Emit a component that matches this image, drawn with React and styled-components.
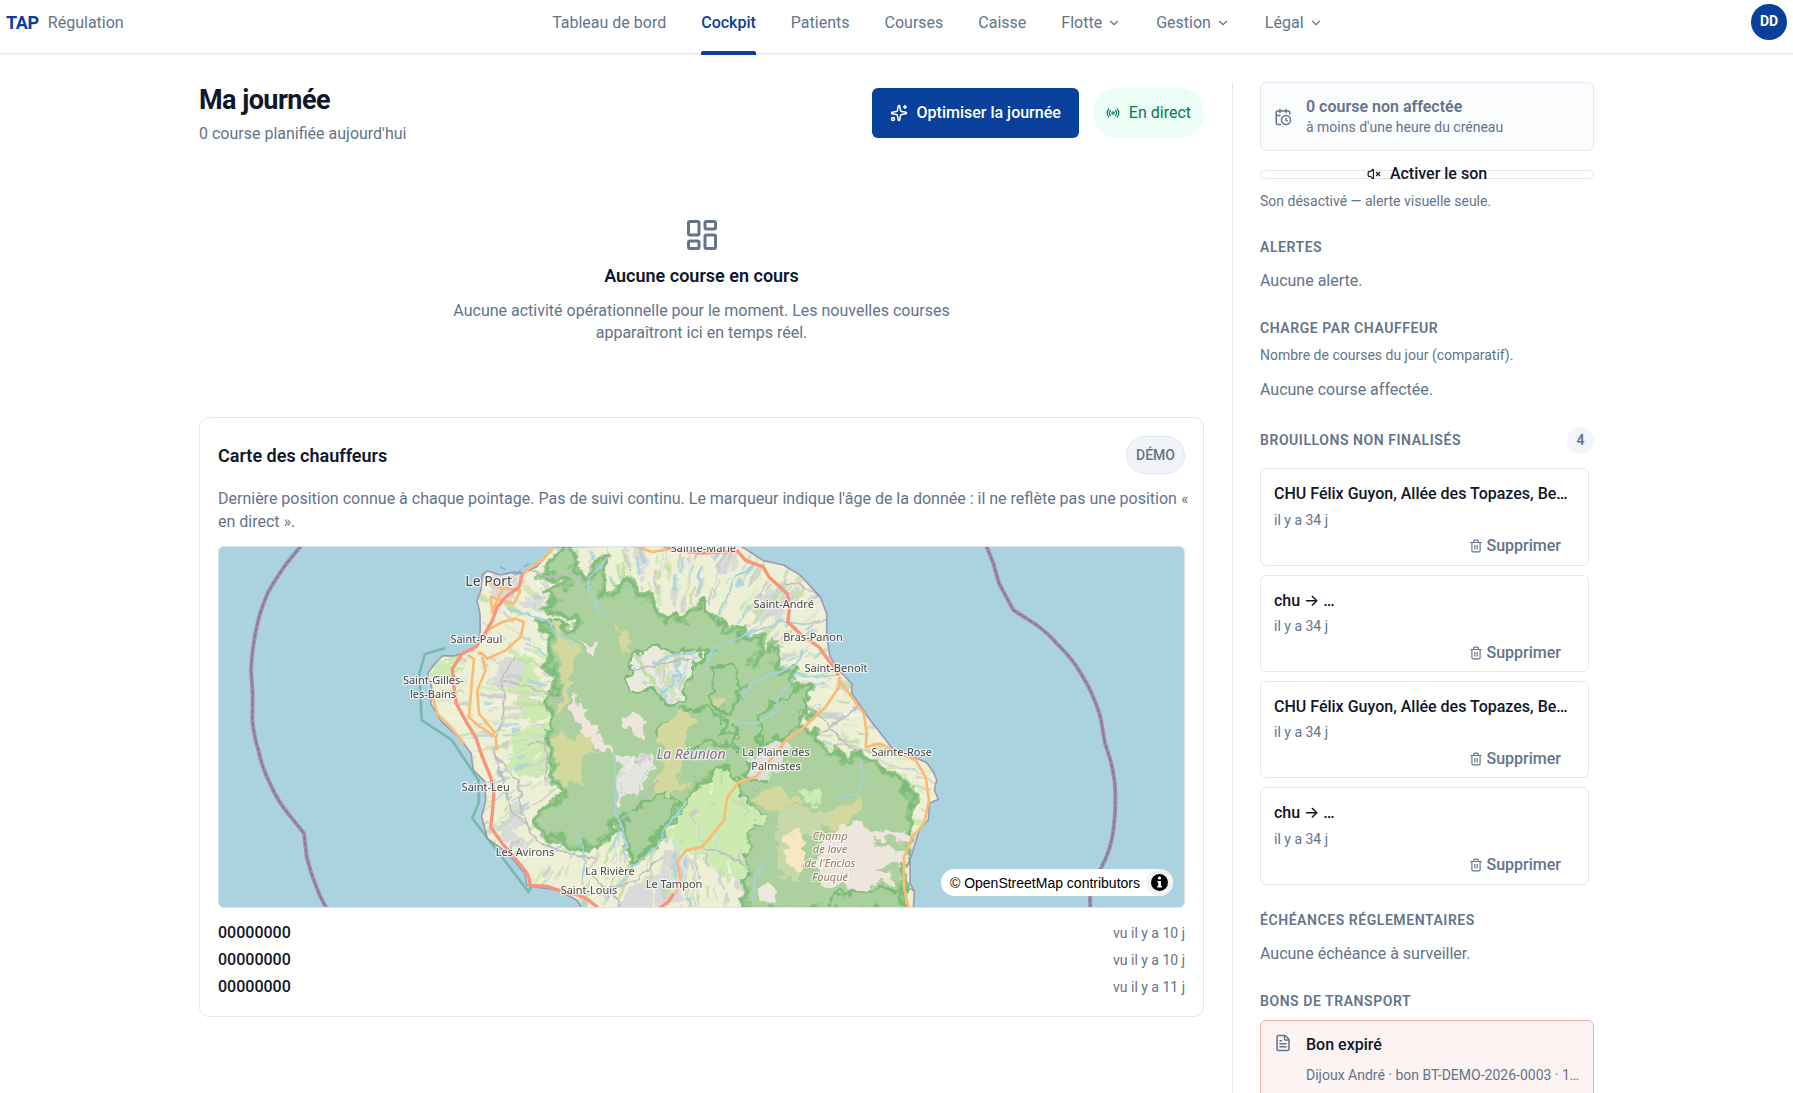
import React from 'react'
import styled, { createGlobalStyle, css } from 'styled-components'
import {
  CalendarClock,
  ChevronDown,
  FileText,
  LayoutDashboard,
  Radio,
  Sparkles,
  Trash2,
  VolumeX
} from 'lucide-react'

const GlobalStyle = createGlobalStyle`
  *, *:before, *:after {
    box-sizing: border-box;
  }

  body {
    margin: 0;
    font: 16px / 1.4 Roboto, Inter, sans-serif;
    color: #0f172a;
    background-color: #fff;
  }

  h1, h2, h3, p, ul {
    margin: 0;
    padding: 0;
  }

  ul {
    list-style: none;
  }

  button {
    font: inherit;
    cursor: pointer;
  }

  svg {
    flex: none;
  }
`

const Shell = styled.div`
  display: flex;
  flex-direction: column;
  height: 100vh;
  overflow: hidden;
`

/* ---------- top bar ---------- */

const TopBar = styled.header`
  display: flex;
  flex: none;
  justify-content: space-between;
  align-items: flex-start;
  height: 54px;
  padding: 4px 6px 0;
  border-bottom: 1px solid #e2e8f0;
  box-shadow: 0 1px 2px rgba(15, 23, 42, 0.05);
`

const Brand = styled.a`
  display: flex;
  align-items: center;
  gap: 9px;
  height: 38px;
  color: #64748b;
  text-decoration: none;

  strong {
    font-size: 18px;
    font-weight: 700;
    color: #08409c;
    letter-spacing: -0.02em;
  }
`

const Nav = styled.nav`
  display: flex;
  gap: 35px;
  height: 50px;
`

const navItem = css`
  position: relative;
  display: flex;
  align-items: center;
  gap: 5px;
  height: 38px;
  padding: 0;
  color: #64748b;
  background: none;
  border: 0;
  text-decoration: none;
`

const NavLink = styled.a`
  ${navItem}

  &.active {
    font-weight: 500;
    color: #08409c;
  }

  &.active:after {
    content: '';
    position: absolute;
    left: 0;
    right: 0;
    bottom: -13px;
    height: 4px;
    background-color: #08409c;
    border-radius: 2px 2px 0 0;
  }
`

const NavButton = styled.button`
  ${navItem}
`

const Avatar = styled.button`
  width: 36px;
  height: 36px;
  padding: 0;
  font-size: 14px;
  font-weight: 700;
  color: #fff;
  background-color: #08409c;
  border: 0;
  border-radius: 50%;
`

/* ---------- page ---------- */

const Page = styled.div`
  display: grid;
  grid-template-columns: minmax(0, 1fr) 362px;
  gap: 28px;
  flex: 1;
  width: 100%;
  max-width: 1395px;
  min-height: 0;
  margin: 0 auto;
  padding-top: 28px;
`

const Main = styled.main`
  display: flex;
  flex-direction: column;
  gap: 28px;
`

const PageHead = styled.div`
  display: flex;
  justify-content: space-between;
  align-items: flex-start;
`

const Title = styled.h1`
  margin-bottom: 5px;
  font-size: 27px;
  font-weight: 700;
  line-height: 36px;
  letter-spacing: -0.02em;
`

const Muted = styled.p`
  color: #64748b;
`

const Small = styled.p`
  font-size: 14px;
  color: #64748b;
`

const Actions = styled.div`
  display: flex;
  gap: 14px;
  padding-top: 6px;
`

const PrimaryButton = styled.button`
  display: flex;
  align-items: center;
  gap: 9px;
  height: 50px;
  padding: 0 18px;
  font-weight: 500;
  color: #fff;
  background-color: #08409c;
  border: 0;
  border-radius: 6px;
`

const LivePill = styled.span`
  display: flex;
  align-items: center;
  gap: 9px;
  height: 50px;
  padding: 0 13px;
  color: #047857;
  background-color: #ecfdf5;
  border-radius: 25px;
`

const Empty = styled.section`
  display: flex;
  flex-direction: column;
  align-items: center;
  padding: 44px 0 45px;
  color: #64748b;
  text-align: center;

  h2 {
    margin: 10px 0 11px;
    font-size: 18px;
    font-weight: 600;
    color: #0f172a;
  }

  p {
    max-width: 500px;
  }
`

const MapCard = styled.section`
  display: flex;
  flex-direction: column;
  gap: 14px;
  padding: 18px;
  border: 1px solid #e2e8f0;
  border-radius: 10px;
`

const MapNote = styled(Muted)`
  margin: 0 -6px -1px 0;
`

const CardHead = styled.div`
  display: flex;
  justify-content: space-between;
  align-items: center;

  h2 {
    font-size: 18px;
    font-weight: 600;
  }
`

const DemoTag = styled.span`
  height: 38px;
  padding: 0 9px;
  font-size: 14px;
  font-weight: 500;
  line-height: 36px;
  color: #64748b;
  background-color: #f1f5f9;
  border: 1px solid #e2e8f0;
  border-radius: 19px;
`

const MapFrame = styled.div`
  position: relative;
  height: 362px;
  overflow: hidden;
  background-color: #aad3df;
  border: 1px solid #dbe5ee;
  border-radius: 6px;

  > svg {
    display: block;
    width: 100%;
    height: 100%;
  }
`

const Attribution = styled.div`
  position: absolute;
  right: 11px;
  bottom: 11px;
  display: flex;
  align-items: center;
  gap: 6px;
  height: 27px;
  padding-left: 9px;
  font: 14px / 20px 'Liberation Sans', sans-serif;
  background-color: #fff;
  border-radius: 14px;

  a {
    color: #000;
    text-decoration: none;
  }

  button {
    display: flex;
    justify-content: center;
    align-items: center;
    width: 27px;
    height: 27px;
    padding: 0;
    background-color: #f2f2f2;
    border: 0;
    border-radius: 50%;
  }
`

const DriverList = styled.ul`
  display: flex;
  flex-direction: column;
  gap: 5px;
`

const Driver = styled.li`
  display: flex;
  justify-content: space-between;
  align-items: center;
  line-height: 22px;

  strong {
    font-weight: 500;
  }

  span {
    font-size: 14px;
    color: #64748b;
  }
`

/* ---------- side column ---------- */

const Side = styled.aside`
  display: flex;
  flex-direction: column;
  gap: 26px;
  padding-left: 27px;
  border-left: 1px solid #e2e8f0;
`

const SideSection = styled.section`
  display: flex;
  flex-direction: column;
  gap: ${props => props.$gap || 13}px;
`

const SideTitle = styled.h2`
  font-size: 14px;
  font-weight: 600;
  color: #64748b;
  letter-spacing: 0.04em;
  text-transform: uppercase;
`

const SideHead = styled.div`
  display: flex;
  justify-content: space-between;
  align-items: center;
`

const Count = styled.span`
  width: 27px;
  height: 27px;
  font-size: 14px;
  font-weight: 600;
  line-height: 27px;
  color: #64748b;
  text-align: center;
  background-color: #f1f5f9;
  border-radius: 50%;
`

const Notice = styled.div`
  display: flex;
  align-items: center;
  gap: 14px;
  margin-bottom: 6px;
  padding: 13px 13px 12px;
  color: #64748b;
  background-color: #fbfcfe;
  border: 1px solid #e2e8f0;
  border-radius: 6px;

  h3 {
    font-size: 16px;
    font-weight: 600;
  }
`

const SoundButton = styled.button`
  display: flex;
  justify-content: center;
  align-items: center;
  gap: 9px;
  height: 9px;
  padding: 0;
  font-weight: 500;
  color: #0f172a;
  background-color: #fff;
  border: 1px solid #e2e8f0;
  border-radius: 6px;
`

const DraftList = styled.ul`
  display: flex;
  flex-direction: column;
  gap: 9px;
  padding-right: 5px;
`

const Draft = styled.li`
  display: flex;
  flex-direction: column;
  gap: 5px;
  padding: 14px 13px 7px;
  border: 1px solid #e2e8f0;
  border-radius: 6px;

  h3 {
    overflow: hidden;
    font-size: 16px;
    font-weight: 500;
    white-space: nowrap;
  }
`

const DeleteButton = styled.button`
  display: flex;
  align-items: center;
  align-self: flex-end;
  gap: 4px;
  padding: 0 14px;
  font-weight: 500;
  color: #64748b;
  background: none;
  border: 0;
`

const Voucher = styled.article`
  display: flex;
  gap: 14px;
  padding: 13px;
  color: #64748b;
  background-color: #fdf3f2;
  border: 1px solid #f3adb0;
  border-radius: 6px;

  h3 {
    margin-bottom: 9px;
    font-size: 16px;
    font-weight: 500;
    color: #0f172a;
  }

  p {
    white-space: nowrap;
  }
`

/* ---------- map drawing ---------- */

const Label = styled.text`
  font-family: 'Noto Sans', sans-serif;
  font-size: ${props => props.$size || 33}px;
  font-style: ${props => props.$italic ? 'italic' : 'normal'};
  fill: ${props => props.$color || '#4a4a4a'};
  stroke: rgba(255, 255, 255, 0.65);
  stroke-width: 8px;
  stroke-linejoin: round;
  paint-order: stroke;
  text-anchor: middle;
`

const COAST = 'M1008 0 978 29 953 59 913 79 883 76 843 84 805 72 790 84 786 129 774 161 783 199 784 249 778 294 733 319 703 327 671 326 648 349 625 381 638 419 635 469 668 524 723 574 756 619 763 669 798 704 800 759 788 809 805 874 853 909 888 944 918 979 923 1014 963 1022 1018 1029 1073 1059 1093 1090 2083 1090 2086 1034 2073 1009 2073 939 2085 899 2101 849 2128 819 2131 769 2158 757 2146 729 2153 699 2143 674 2123 647 2083 629 2023 609 1993 569 1953 519 1898 439 1898 409 1858 369 1833 329 1823 269 1823 199 1803 149 1743 84 1693 54 1633 41 1558 -8Z'

const FOREST = 'M1058 -10 1063 39 1098 109 1118 89 1133 54 1158 24 1165 39 1143 89 1153 129 1173 144 1203 119 1233 94 1248 109 1243 139 1288 144 1300 190 1348 219 1373 204 1393 219 1423 189 1453 159 1463 194 1488 219 1523 244 1573 244 1578 254 1548 274 1603 274 1633 262 1603 354 1663 284 1673 324 1668 369 1723 359 1703 399 1743 419 1778 424 1748 459 1773 494 1718 539 1783 554 1823 609 1883 644 1923 619 1993 669 2048 704 2083 739 2078 789 2068 829 2078 879 2053 939 2053 1090 1583 1090 1578 939 1583 859 1633 809 1583 779 1563 719 1523 659 1493 669 1443 699 1413 759 1353 829 1253 949 1228 909 1213 839 1183 829 1143 899 1083 899 983 869 938 824 983 779 1043 744 993 694 990 479 1021 379 978 359 998 299 983 259 953 219 1003 239 1053 247 1083 229 1073 214 1013 209 983 179 1013 159 968 144 1043 109 1003 84 973 84 1028 -10Z'

// wooded ridges drawn with their own darker outline
const RIDGES = [
  'M1478 360 1533 349 1553 399 1573 414 1548 449 1538 494 1493 489 1473 464 1483 420Z',
  'M1395 483 1460 485 1533 529 1505 560 1555 555 1553 600 1490 590 1400 600 1340 590 1310 555 1380 505Z',
  'M1213 790 1270 775 1300 740 1360 745 1380 770 1320 850 1253 949 1228 909Z',
  'M1630 500 1700 450 1743 419 1778 424 1748 459 1773 494 1700 560 1620 590Z',
  'M1815 1090 1840 1050 1920 1028 2040 1024 2060 1090Z'
]

const CLEARINGS = [
  ['#eceadf', 'M1240 320 1300 297 1350 315 1440 312 1475 305 1430 350 1410 390 1395 430 1385 470 1355 475 1310 440 1290 425 1235 432 1225 400Z'],
  ['#e6e6e0', 'M1190 610 1230 640 1285 620 1300 660 1275 720 1265 755 1220 750 1195 775 1180 730 1200 690Z'],
  ['#e0e0dc', 'M1585 650 1640 600 1690 570 1720 600 1690 650 1660 700 1610 715 1570 690Z'],
  ['#cdebb0', 'M1490 672 1530 668 1560 720 1580 780 1640 810 1580 860 1578 1000 1480 960 1400 900 1340 850 1420 750Z'],
  ['#cdebb0', 'M1730 730 1800 725 1815 765 1760 768Z'],
  ['#eceadf', 'M1630 1020 1660 1010 1675 1050 1660 1075 1630 1060Z'],
  ['#d3d89c', 'M1003 570 1100 560 1130 610 1100 640 1090 705 1040 720 1005 690Z'],
  ['#d3d89c', 'M1000 230 1060 285 1080 300 1060 380 1050 460 1010 490 1035 380 1025 330Z'],
  ['#d3d89c', 'M1187 240 1215 250 1240 290 1225 312 1205 285Z'],
  ['#d3d89c', 'M1315 560 1370 500 1400 495 1435 520 1405 555 1410 590 1370 660 1410 720 1350 745 1300 730 1340 640Z'],
  ['#d3d89c', 'M1480 465 1500 440 1525 465 1500 480Z'],
  ['#d3d89c', 'M1590 755 1680 715 1700 740 1760 770 1680 790 1600 775Z'],
  ['#d3d89c', 'M1850 780 1930 745 1925 790 1870 840 1800 850Z'],
  ['#c8d8ab', 'M1680 790 1760 780 1850 800 1800 850 1740 870 1740 1000 1680 1000 1670 880Z'],
  ['#f7e8c2', 'M1695 880 1755 845 1760 930 1735 985 1705 940Z'],
  ['#eee5dc', 'M1850 835 1930 825 1975 860 2080 850 2075 880 1960 880 2060 920 2050 955 1970 960 2040 1000 1900 1025 1820 1020 1790 960 1810 890Z'],
  ['#eee5dc', 'M1070 440 1090 500 1130 560 1160 580 1170 620 1120 590 1080 540 1055 480Z'],
  ['#eee5dc', 'M1215 515 1245 490 1280 525 1265 570 1225 545Z'],
  ['#eee5dc', 'M1080 270 1120 300 1125 335 1100 310Z']
]

const WEST_SLOPE = [
  'M880 290 940 330 960 400 985 450 980 520 930 520 900 460 870 420Z',
  'M870 540 980 560 985 700 930 690 860 660 885 610Z',
  'M925 540 988 530 988 590 925 590Z',
  'M640 350 720 325 740 360 700 400 640 410Z',
  'M1340 850 1400 800 1450 830 1480 900 1380 930Z'
]

const URBAN = [
  'M800 90 880 85 905 120 870 170 820 150Z',
  'M930 150 960 155 985 200 930 190 900 175Z',
  'M850 350 920 320 900 400 840 430 810 400Z',
  'M830 830 880 840 930 900 890 910 840 870Z',
  'M870 770 920 760 910 850 870 840Z',
  'M1200 1060 1270 1000 1340 960 1360 900 1420 950 1390 1040 1330 1090 1210 1090Z',
  'M1235 0 1290 0 1300 60 1270 90Z',
  'M1480 20 1560 10 1540 80 1500 90Z',
  'M1650 110 1700 130 1690 200 1620 230 1600 190Z',
  'M1840 380 1900 410 1890 450 1850 420Z'
]

const RIVERS = [
  'M865 185 940 205 985 225 1015 260 1060 290',
  'M1165 30 1115 90 1105 130 1130 160 1155 215',
  'M1605 60 1550 90 1530 140 1490 220',
  'M1823 215 1770 230 1700 222 1600 260 1540 280 1480 300 1460 370',
  'M1750 300 1740 350 1640 390 1600 410 1565 465',
  'M1860 385 1790 390 1730 380 1690 440 1660 510 1600 530 1540 520',
  'M1925 635 1932 690 1915 740 1860 750',
  'M1403 770 1350 830 1310 900 1250 950 1160 1060',
  'M1180 620 1190 700 1190 790 1215 860 1222 930',
  'M1660 930 1610 980 1605 1060',
  'M1330 440 1370 390 1400 380',
  'M1300 350 1370 320 1430 315',
  'M1080 860 1095 930 1090 1010',
  'M1445 60 1438 140'
]

const MAIN_ROADS = [
  'M910 82 900 120 860 150 835 180 820 220 795 265 770 300 730 320 700 365 705 420 712 470 745 530 770 570 790 630 815 690 825 730 820 800 815 840 850 890 885 930 925 980 935 1015 985 1018 1020 1030 1080 1045 1110 1060 1145 1090',
  'M1330 -4 1400 14 1453 18 1555 12 1580 40 1633 60 1650 90 1705 140 1712 180 1706 225 1745 262 1800 300 1850 370 1858 385',
  'M1365 1040 1350 1062 1320 1085'
]

const ROADS = [
  'M1008 -4 975 35 930 65 913 82',
  'M800 95 830 120 905 130 885 170 815 150 820 195',
  'M855 115 835 160 818 200',
  'M805 250 850 225 890 215 915 225 905 270 860 310 805 335 790 320 775 318',
  'M745 325 765 335 760 390 755 450 750 510 770 530 800 550 830 570 834 610',
  'M790 330 800 370 775 430 780 500 830 560',
  'M638 440 655 500 700 545 735 590',
  'M1860 390 1860 420 1820 480 1750 545 1700 580 1670 620 1610 690 1560 705 1525 750 1515 820 1450 900 1400 910 1375 945 1385 1000 1370 1040',
  'M1862 400 1898 450 1935 500 1943 560 1940 600 1985 590 2030 615 2090 640 2120 690 2130 760 2115 830 2080 870 2055 930 2055 1020 2070 1090',
  'M1240 -4 1300 15 1360 5'
]

const MINOR_ROADS = [
  'M890 330 850 390 855 450 848 520 830 580 832 640 900 700 905 800 950 880 1020 910 1140 940',
  'M830 650 860 720 880 800 940 850',
  'M850 400 900 410 960 430 1030 460',
  'M925 590 980 585 985 700',
  'M930 70 1000 90 1050 80 1098 109',
  'M1225 375 1330 350 1440 330',
  'M1770 480 1850 560 1900 600',
  'M1800 560 1890 500 1930 470',
  'M1450 900 1560 940 1600 980',
  'M1200 830 1260 760 1320 700',
  'M1130 1040 1250 1000 1330 930',
  'M1090 960 1180 1040 1210 1080',
  'M1690 110 1740 110 1800 150'
]

const SEA_LIMITS = [
  'M248 -6 203 49Q170 95 148 134 128 180 118 219 100 290 96 369L101 439 100 519Q105 570 118 609 130 665 153 709 175 760 203 794L255 859 263 929Q275 975 288 1009 302 1050 324 1086',
  'M2301 -6 2323 49 2340 109 2383 189 2453 234Q2490 262 2513 289 2550 325 2573 359 2605 410 2618 439 2640 490 2646 519L2658 589Q2676 640 2681 669 2690 710 2689 749 2690 800 2683 849 2675 910 2648 959 2618 1010 2613 1049L2614 1090'
]

const PLACES = [
  [809, 116, 'Le Port', 42],
  [772, 289, 'Saint-Paul'],
  [643, 411, 'Saint-Gilles-'],
  [642, 454, 'les-Bains'],
  [800, 732, 'Saint-Leu'],
  [918, 928, 'Les Avirons'],
  [1173, 985, 'La Rivière'],
  [1365, 1022, 'Le Tampon'],
  [1110, 1040, 'Saint-Louis'],
  [1453, 15, 'Sainte-Marie'],
  [1694, 182, 'Saint-André'],
  [1782, 283, 'Bras-Panon'],
  [1851, 375, 'Saint-Benoît'],
  [2048, 626, 'Sainte-Rose'],
  [1671, 626, 'La Plaine des'],
  [1671, 669, 'Palmistes']
]

const LAVA_FIELD = [
  [879, 'Champ'],
  [919, 'de lave'],
  [960, "de l'Enclos"],
  [1001, 'Fouqué']
]

// short gullies running from the summits to the shore
const makeGullies = (count, near, far, seed) => {
  const colors = ['#cfcfcf', '#bfe0a2', '#f5f1ec', '#a6d2e0', '#d4d4d2', '#cdebb0', '#c9c9c9', '#c3dcae']
  const random = () => {
    seed = (seed * 16807) % 2147483647
    return seed / 2147483647
  }
  return Array.from({ length: count }, (_, i) => {
    const angle = random() * Math.PI * 2
    const distance = near + random() * (far - near)
    const length = 20 + random() * 55
    const x = Math.round(1350 + Math.cos(angle) * distance)
    const y = Math.round(500 + Math.sin(angle) * distance * 0.9)
    const dx = Math.round(Math.cos(angle) * length)
    const dy = Math.round(Math.sin(angle) * length)
    return { d: `M${x} ${y}l${dx} ${dy}`, color: colors[i % colors.length], width: 3 + Math.round(random() * 8) }
  })
}

const GULLIES = makeGullies(1300, 330, 850, 17)
const INNER_GULLIES = makeGullies(500, 20, 560, 71)

const Gullies = ({ list }) => list.map((gully, i) => (
  <path key={ i } d={ gully.d } stroke={ gully.color } strokeWidth={ gully.width } opacity="0.85" />
))

const IslandMap = () => (
  <svg viewBox="0 0 2895 1080" preserveAspectRatio="xMidYMid slice" role="img" aria-label="Carte de La Réunion">
    <defs>
      <clipPath id="island">
        <path d={ COAST } />
      </clipPath>
      <clipPath id="valleys">
        { CLEARINGS.slice(0, 4).map(([color, d]) => <path key={ d } d={ d } />) }
      </clipPath>
      <filter id="rough" x="-5%" y="-5%" width="110%" height="110%">
        <feTurbulence type="fractalNoise" baseFrequency="0.025" numOctaves="3" seed="4" />
        <feDisplacementMap in="SourceGraphic" scale="60" xChannelSelector="R" yChannelSelector="G" />
      </filter>
      <filter id="wavy" x="-5%" y="-5%" width="110%" height="110%">
        <feTurbulence type="fractalNoise" baseFrequency="0.03" numOctaves="2" seed="9" />
        <feDisplacementMap in="SourceGraphic" scale="24" xChannelSelector="R" yChannelSelector="G" />
      </filter>
    </defs>
    <rect width="2895" height="1080" fill="#aad3df" />

    <path
      d="M678 304 618 321 601 379 608 519 698 579 778 699 780 764 760 814 928 1034 938 1018"
      fill="none" stroke="#6db39f" strokeWidth="8" opacity="0.8"
    />

    <g clipPath="url(#island)">
      <path d={ COAST } fill="#eef0d5" />
      <g filter="url(#rough)">
        { WEST_SLOPE.map(d => <path key={ d } d={ d } fill="#cdebb0" />) }
        { URBAN.map(d => <path key={ d } d={ d } fill="#dadada" />) }
      </g>
      <g fill="none" filter="url(#wavy)">
        <Gullies list={ GULLIES } />
      </g>
      <g filter="url(#rough)" strokeLinejoin="round">
        <path d={ FOREST } fill="#add19e" stroke="#98c88e" strokeWidth="22" />
        <path d={ FOREST } fill="none" stroke="#7dbd78" strokeWidth="9" />
        { RIDGES.map(d => (
          <path key={ d } d={ d } fill="#a9d09c" stroke="#7dbd78" strokeWidth="10" />
        )) }
        { CLEARINGS.map(([color, d]) => <path key={ d } d={ d } fill={ color } />) }
        <g fill="none" clipPath="url(#valleys)">
          <Gullies list={ INNER_GULLIES } />
        </g>
        <path d={ CLEARINGS[0][1] } fill="none" stroke="#7dbd78" strokeWidth="10" />
        <path d="M1585 650 1570 690 1610 715 1660 700" fill="none" stroke="#7dbd78" strokeWidth="10" />
      </g>
      <g fill="none" filter="url(#wavy)">
        { MINOR_ROADS.map(d => <path key={ d } d={ d } stroke="#bdbdc0" strokeWidth="5" />) }
        { RIVERS.map(d => <path key={ d } d={ d } stroke="#a6d2df" strokeWidth="6" />) }
      </g>
    </g>

    <g fill="none" strokeLinejoin="round">
      <path d={ COAST } stroke="#8f7fa5" strokeWidth="5" opacity="0.7" />
      { ROADS.map(d => <path key={ d } d={ d } stroke="#fbbb74" strokeWidth="8" />) }
      { MAIN_ROADS.map(d => <path key={ d } d={ d } stroke="#f9937c" strokeWidth="10" />) }
      { SEA_LIMITS.map(d => (
        <g key={ d }>
          <path d={ d } stroke="#a08fb0" strokeWidth="12" />
          <path d={ d } stroke="#8d6f97" strokeWidth="4" strokeDasharray="14 5" />
        </g>
      )) }
      <path d="M843 60 860 68M875 74 890 84 905 70M915 60 930 50" stroke="#7fa4e8" strokeWidth="4" />
    </g>

    { PLACES.map(([x, y, name, size]) => (
      <Label key={ name } x={ x } y={ y } $size={ size }>{ name }</Label>
    )) }
    <Label x="1416" y="637" $size={ 42 } $italic $color="#8d6b9a">La Réunion</Label>
    { LAVA_FIELD.map(([y, line]) => (
      <Label key={ line } x="1833" y={ y } $italic $color="#9c7c63">{ line }</Label>
    )) }
  </svg>
)

/* ---------- content ---------- */

const links = ['Tableau de bord', 'Cockpit', 'Patients', 'Courses', 'Caisse']
const menus = ['Flotte', 'Gestion', 'Légal']

const drivers = [
  { name: '00000000', seen: 'vu il y a 10 j' },
  { name: '00000000', seen: 'vu il y a 10 j' },
  { name: '00000000', seen: 'vu il y a 11 j' }
]

const drafts = [
  'CHU Félix Guyon, Allée des Topazes, Be…',
  'chu → …',
  'CHU Félix Guyon, Allée des Topazes, Be…',
  'chu → …'
]

const Header = () => (
  <TopBar>
    <Brand href="#"><strong>TAP</strong>Régulation</Brand>
    <Nav>
      { links.map(link => (
        <NavLink key={ link } href="#" className={ link === 'Cockpit' ? 'active' : '' }>{ link }</NavLink>
      )) }
      { menus.map(menu => (
        <NavButton key={ menu } type="button">{ menu }<ChevronDown size={ 14 } /></NavButton>
      )) }
    </Nav>
    <Avatar type="button">DD</Avatar>
  </TopBar>
)

const DriversCard = () => (
  <MapCard>
    <CardHead>
      <h2>Carte des chauffeurs</h2>
      <DemoTag>DÉMO</DemoTag>
    </CardHead>
    <MapNote>
      Dernière position connue à chaque pointage. Pas de suivi continu. Le marqueur indique
      l'âge de la donnée : il ne reflète pas une position « en direct ».
    </MapNote>
    <MapFrame>
      <IslandMap />
      <Attribution>
        <a href="#">© OpenStreetMap contributors</a>
        <button type="button" aria-label="Attribution">
          <svg width="17" height="17" viewBox="0 0 17 17">
            <circle cx="8.5" cy="8.5" r="8.5" />
            <circle cx="8.5" cy="4" r="1.6" fill="#fff" />
            <path d="M6.5 7h3.4v5h1v1.5H6.3V12h1V8.5h-.8z" fill="#fff" />
          </svg>
        </button>
      </Attribution>
    </MapFrame>
    <DriverList>
      { drivers.map((driver, i) => (
        <Driver key={ i }>
          <strong>{ driver.name }</strong>
          <span>{ driver.seen }</span>
        </Driver>
      )) }
    </DriverList>
  </MapCard>
)

const SideColumn = () => (
  <Side>
    <SideSection>
      <Notice>
        <CalendarClock size={ 18 } />
        <div>
          <h3>0 course non affectée</h3>
          <Small>à moins d'une heure du créneau</Small>
        </div>
      </Notice>
      <SoundButton type="button"><VolumeX size={ 14 } />Activer le son</SoundButton>
      <Small>Son désactivé — alerte visuelle seule.</Small>
    </SideSection>

    <SideSection>
      <SideTitle>Alertes</SideTitle>
      <Muted>Aucune alerte.</Muted>
    </SideSection>

    <SideSection>
      <SideSection $gap={ 8 }>
        <SideTitle>Charge par chauffeur</SideTitle>
        <Small>Nombre de courses du jour (comparatif).</Small>
      </SideSection>
      <Muted>Aucune course affectée.</Muted>
    </SideSection>

    <SideSection $gap={ 14 }>
      <SideHead>
        <SideTitle>Brouillons non finalisés</SideTitle>
        <Count>4</Count>
      </SideHead>
      <DraftList>
        { drafts.map((draft, i) => (
          <Draft key={ i }>
            <h3>{ draft }</h3>
            <Small>il y a 34 j</Small>
            <DeleteButton type="button"><Trash2 size={ 14 } />Supprimer</DeleteButton>
          </Draft>
        )) }
      </DraftList>
    </SideSection>

    <SideSection>
      <SideTitle>Échéances réglementaires</SideTitle>
      <Muted>Aucune échéance à surveiller.</Muted>
    </SideSection>

    <SideSection $gap={ 9 }>
      <SideTitle>Bons de transport</SideTitle>
      <Voucher>
        <FileText size={ 18 } />
        <div>
          <h3>Bon expiré</h3>
          <Small>Dijoux André · bon BT-DEMO-2026-0003 · 1…</Small>
        </div>
      </Voucher>
    </SideSection>
  </Side>
)

const App = () => (
  <Shell>
    <GlobalStyle />
    <Header />
    <Page>
      <Main>
        <PageHead>
          <div>
            <Title>Ma journée</Title>
            <Muted>0 course planifiée aujourd'hui</Muted>
          </div>
          <Actions>
            <PrimaryButton type="button"><Sparkles size={ 18 } />Optimiser la journée</PrimaryButton>
            <LivePill><Radio size={ 14 } />En direct</LivePill>
          </Actions>
        </PageHead>
        <Empty>
          <LayoutDashboard size={ 36 } />
          <h2>Aucune course en cours</h2>
          <p>Aucune activité opérationnelle pour le moment. Les nouvelles courses apparaîtront ici en temps réel.</p>
        </Empty>
        <DriversCard />
      </Main>
      <SideColumn />
    </Page>
  </Shell>
)

export default App
